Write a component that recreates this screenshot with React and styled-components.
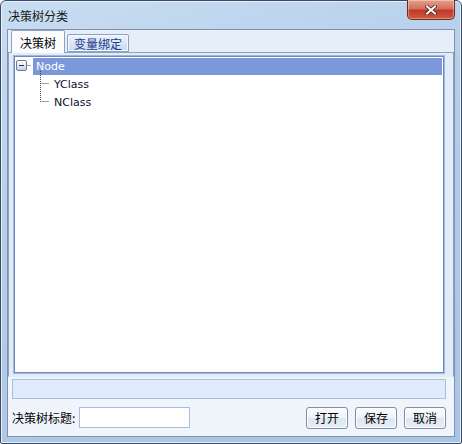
import React from 'react';
import styled, { createGlobalStyle } from 'styled-components';

const Global = createGlobalStyle`
  html, body { margin: 0; padding: 0; background: #ffffff; }
  body { font-family: "Liberation Sans", "Noto Sans CJK SC", sans-serif; font-size: 12px; }
`;

const Window = styled.div`
  box-sizing: border-box;
  width: 462px;
  height: 444px;
  border: 1px solid #3a4a62;
  border-radius: 6px 6px 2px 2px;
  background: linear-gradient(160deg, #c9ddf2 0%, #b4cde9 40%, #a9c4e4 100%);
  display: flex;
  flex-direction: column;
  box-shadow: inset 0 0 0 1px #e8f1fb;
`;

const TitleBar = styled.div`
  height: 28px;
  display: flex;
  align-items: flex-start;
  position: relative;
  & .title {
    margin: 6px 0 0 7px;
    font-size: 12px;
    color: #1a1a1a;
    font-family: "Noto Sans CJK SC", sans-serif;
  }
`;

const CloseButton = styled.div`
  position: absolute;
  right: 6px;
  top: -1px;
  width: 46px;
  height: 19px;
  border: 1px solid #6e2a22;
  border-top: none;
  border-radius: 0 0 5px 5px;
  background: linear-gradient(#e6a08f 0%, #d4705b 45%, #c0392a 55%, #cf5a3a 100%);
  box-shadow: inset 0 0 0 1px rgba(255,255,255,0.35);
  display: flex;
  align-items: center;
  justify-content: center;
`;

const Client = styled.div`
  flex: 1;
  margin: 0 6px 6px 6px;
  border: 1px solid #7f92ad;
  background: #f0f5fc;
  display: flex;
  flex-direction: column;
`;

const TabStrip = styled.div`
  height: 22px;
  display: flex;
  align-items: flex-end;
  padding-left: 3px;
  background: #e6eef9;
  position: relative;
  z-index: 1;
`;

const Tab = styled.div`
  box-sizing: border-box;
  height: ${p => (p.$active ? '23px' : '18px')};
  margin-bottom: ${p => (p.$active ? '-1px' : '0')};
  margin-right: 2px;
  padding: 0 ${p => (p.$active ? '8px' : '6px')};
  border: 1px solid #8da2c0;
  border-bottom: ${p => (p.$active ? 'none' : '1px solid #8da2c0')};
  border-radius: 2px 2px 0 0;
  background: ${p => (p.$active ? '#fbfcfe' : 'linear-gradient(#eef3fb, #c9d9f0)')};
  color: ${p => (p.$active ? '#000000' : '#1b3a8c')};
  font-family: "Noto Sans CJK SC", sans-serif;
  font-size: 12px;
  display: flex;
  align-items: center;
  ${p => !p.$active && 'box-shadow: inset 0 0 0 1px #f6f9fd;'}
`;

const Panel = styled.div`
  box-sizing: border-box;
  height: 325px;
  border: 1px solid #8da2c0;
  border-bottom-color: #e2ecf9;
  background: #e2ecf9;
  padding: 2px 8px 2px 4px;
  display: flex;
`;

const TreeBox = styled.div`
  flex: 1;
  position: relative;
  border: 1px solid #a3b7d8;
  box-shadow: inset 0 0 0 1px #6e8ac0;
  background: #ffffff;
  padding: 1px 2px 2px 2px;
`;

const TreeRow = styled.div`
  height: 18px;
  display: flex;
  align-items: center;
  padding-left: ${p => p.$indent}px;
`;

const Label = styled.div`
  flex: ${p => (p.$selected ? 1 : 'none')};
  height: 17px;
  line-height: 17px;
  padding-left: 3px;
  background: ${p => (p.$selected ? '#7b98db' : 'transparent')};
  color: ${p => (p.$selected ? '#ffffff' : '#101030')};
  font-family: "DejaVu Sans", "Liberation Sans", sans-serif;
  font-size: 11px;
`;

const Expander = styled.div`
  box-sizing: border-box;
  position: absolute;
  left: 2px;
  top: 4px;
  width: 11px;
  height: 11px;
  border: 1px solid #6c7c94;
  border-radius: 2px;
  background: linear-gradient(#ffffff, #c6d2e4);
  display: flex;
  align-items: center;
  justify-content: center;
  &::after {
    content: '';
    width: 5px;
    height: 1px;
    background: #20305a;
  }
`;

const Lines = styled.svg`
  position: absolute;
  left: 0;
  top: 0;
`;

const StatusBar = styled.div`
  height: 20px;
  margin: 2px 8px 0 4px;
  box-sizing: border-box;
  border: 1px solid #a9bfdf;
  background: #dfeafa;
`;

const BottomRow = styled.div`
  flex: 1;
  display: flex;
  align-items: center;
  padding: 0 8px 0 4px;
`;

const FieldLabel = styled.span`
  font-family: "Noto Sans CJK SC", sans-serif;
  font-size: 12px;
  color: #000;
  margin-right: 4px;
`;

const TextInput = styled.input`
  box-sizing: border-box;
  width: 111px;
  height: 21px;
  border: 1px solid #a5bfe3;
  background: #ffffff;
  outline: none;
`;

const Buttons = styled.div`
  margin-left: auto;
  display: flex;
  gap: 7px;
`;

const Button = styled.button`
  box-sizing: border-box;
  width: 42px;
  height: 22px;
  padding: 0;
  border: 1px solid #7d8ea6;
  border-radius: 3px;
  background: linear-gradient(#fbfcfe 0%, #eef3f9 50%, #dde6f1 51%, #e6edf6 100%);
  box-shadow: inset 0 0 0 1px #ffffff;
  font-family: "Noto Sans CJK SC", sans-serif;
  font-size: 12px;
  color: #000;
`;

const App = () => {
  return (
    <>
      <Global />
      <Window>
        <TitleBar>
          <span className="title">决策树分类</span>
          <CloseButton>
            <svg width="12" height="10" viewBox="0 0 12 10">
              <path d="M2 1.5 L10 8.5 M10 1.5 L2 8.5" stroke="#4a2020" strokeWidth="3.6" strokeLinecap="square" />
              <path d="M2 1.5 L10 8.5 M10 1.5 L2 8.5" stroke="#ffffff" strokeWidth="2" strokeLinecap="square" />
            </svg>
          </CloseButton>
        </TitleBar>
        <Client>
          <TabStrip>
            <Tab $active>决策树</Tab>
            <Tab>变量绑定</Tab>
          </TabStrip>
          <Panel>
            <TreeBox>
              <Lines width="60" height="60">
                <path d="M13.5 9.5 H17 M26.5 15 V45.5 M26.5 27.5 H35 M26.5 45.5 H35" stroke="#444" strokeDasharray="1 1" fill="none" />
              </Lines>
              <Expander />
              <TreeRow $indent={17}>
                <Label $selected>Node</Label>
              </TreeRow>
              <TreeRow $indent={35}>
                <Label>YClass</Label>
              </TreeRow>
              <TreeRow $indent={35}>
                <Label>NClass</Label>
              </TreeRow>
            </TreeBox>
          </Panel>
          <StatusBar />
          <BottomRow>
            <FieldLabel>决策树标题:</FieldLabel>
            <TextInput />
            <Buttons>
              <Button>打开</Button>
              <Button>保存</Button>
              <Button>取消</Button>
            </Buttons>
          </BottomRow>
        </Client>
      </Window>
    </>
  );
};

export default App;
